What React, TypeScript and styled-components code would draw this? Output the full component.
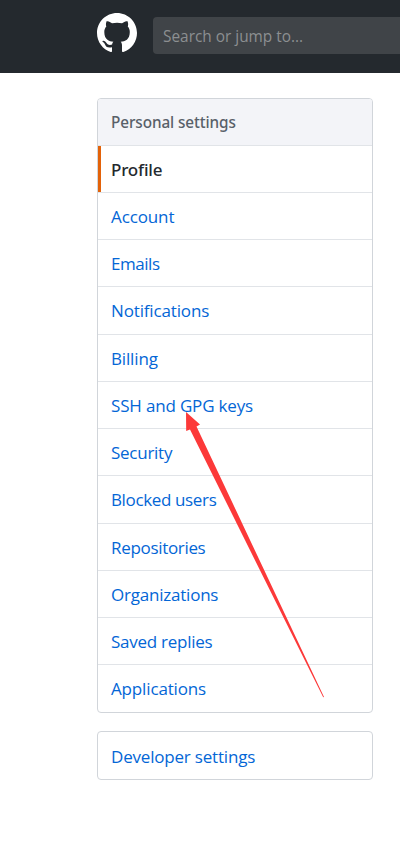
import React from 'react';
import styled, { createGlobalStyle } from 'styled-components';

const GlobalStyle = createGlobalStyle`
  * { box-sizing: border-box; }
  body {
    margin: 0;
    background: #fff;
    font-family: "Open Sans", "Noto Sans", sans-serif;
    overflow: hidden;
  }
`;

const Page = styled.div`
  position: relative;
  width: 100%;
  min-height: 855px;
  overflow: hidden;
`;

const Header = styled.header`
  display: flex;
  height: 73px;
  padding: 13px 0 0 97px;
  gap: 16px;
  background: #24292e;
`;

const Logo = styled.svg`
  flex: none;
  width: 40px;
  height: 40px;
  fill: #fff;
`;

const SearchField = styled.div`
  flex: 1;
  display: flex;
  align-items: center;
  height: 37px;
  margin-top: 4px;
  padding: 2px 0 0 10px;
  border-radius: 4px 0 0 4px;
  background: #404448;
  color: #8c8f91;
  font-size: 15.4px;
  white-space: nowrap;
`;

const Sidebar = styled.nav`
  display: flex;
  flex-direction: column;
  gap: 18px;
  width: 276px;
  margin: 25px 0 0 97px;
`;

const Menu = styled.div`
  border: 1px solid #d1d5da;
  border-radius: 4px;
  overflow: hidden;
`;

const MenuHeading = styled.h3`
  display: flex;
  align-items: center;
  height: 47px;
  margin: 0;
  padding: 0 0 0 13px;
  border-bottom: 1px solid #e1e4e8;
  background: #f3f4f8;
  color: #586069;
  font-family: "Noto Sans", "Open Sans", sans-serif;
  font-size: 15.3px;
  font-weight: 500;
  letter-spacing: -0.09px;
`;

const MenuItem = styled.a<{ $tall?: boolean; $active?: boolean; $raised?: boolean; $tracking?: number }>`
  display: flex;
  align-items: center;
  height: ${p => (p.$tall ? 48 : 47)}px;
  padding-top: ${p => (p.$tall || p.$raised ? 0 : 1)}px;
  padding-bottom: ${p => (p.$tall || p.$raised ? 1 : 0)}px;
  padding-left: 13px;
  border-bottom: 1px solid #e1e4e8;
  box-shadow: ${p => (p.$active ? 'inset 3px 0 0 #e36209' : 'none')};
  color: ${p => (p.$active ? '#24292e' : '#0366d6')};
  font-family: ${p => (p.$active ? '"Noto Sans", "Open Sans"' : '"Open Sans", "Noto Sans"')}, sans-serif;
  font-size: 17px;
  font-weight: ${p => (p.$active ? 500 : 400)};
  letter-spacing: ${p => p.$tracking ?? 0}px;
  white-space: nowrap;
  text-decoration: none;

  &:last-child { border-bottom: 0; }
`;

const Pointer = styled.svg`
  position: absolute;
  top: 405px;
  left: 180px;
  width: 150px;
  height: 297px;
  fill: #fc3939;
  pointer-events: none;
`;

const items = [
  { label: 'Profile', active: true, tracking: -0.2 },
  { label: 'Account', tracking: -0.12 },
  { label: 'Emails', tracking: -0.45 },
  { label: 'Notifications', tall: true, tracking: -0.15 },
  { label: 'Billing', tracking: -0.15 },
  { label: 'SSH and GPG keys', tracking: -0.17 },
  { label: 'Security', tracking: -0.26 },
  { label: 'Blocked users', tall: true, tracking: -0.36 },
  { label: 'Repositories', tracking: -0.32 },
  { label: 'Organizations', tracking: -0.22 },
  { label: 'Saved replies', tracking: -0.26 },
  { label: 'Applications', raised: true, tracking: -0.15 },
];

export default function App() {
  return (
    <Page>
      <GlobalStyle />
      <Header>
        <Logo viewBox="0 0 16 16" aria-label="GitHub">
          <path
            fillRule="evenodd"
            d="M8 0C3.58 0 0 3.58 0 8c0 3.54 2.29 6.53 5.47 7.59.4.07.55-.17.55-.38 0-.19-.01-.82-.01-1.49-2.01.37-2.53-.49-2.69-.94-.09-.23-.48-.94-.82-1.13-.28-.15-.68-.52-.01-.53.63-.01 1.08.58 1.23.82.72 1.21 1.87.87 2.33.66.07-.52.28-.87.51-1.07-1.78-.2-3.64-.89-3.64-3.95 0-.87.31-1.59.82-2.15-.08-.2-.36-1.02.08-2.12 0 0 .67-.21 2.2.82.64-.18 1.32-.27 2-.27.68 0 1.36.09 2 .27 1.53-1.04 2.2-.82 2.2-.82.44 1.1.16 1.92.08 2.12.51.56.82 1.27.82 2.15 0 3.07-1.87 3.75-3.65 3.95.29.25.54.73.54 1.48 0 1.07-.01 1.93-.01 2.2 0 .21.15.46.55.38A8.013 8.013 0 0 0 16 8c0-4.42-3.58-8-8-8z"
          />
        </Logo>
        <SearchField>Search or jump to...</SearchField>
      </Header>
      <Sidebar>
        <Menu>
          <MenuHeading>Personal settings</MenuHeading>
          {items.map(item => (
            <MenuItem
              key={item.label}
              href="#"
              $active={item.active}
              $tall={item.tall}
              $raised={item.raised}
              $tracking={item.tracking}
            >
              {item.label}
            </MenuItem>
          ))}
        </Menu>
        <Menu>
          <MenuItem href="#" $tracking={-0.19}>Developer settings</MenuItem>
        </Menu>
      </Sidebar>
      <Pointer viewBox="180 405 150 297" aria-hidden="true">
        <path d="M186 412L200 424.500L196.500 426.500L324 697L323.200 697.300L190 429.500L186.200 431Z" />
      </Pointer>
    </Page>
  );
}
